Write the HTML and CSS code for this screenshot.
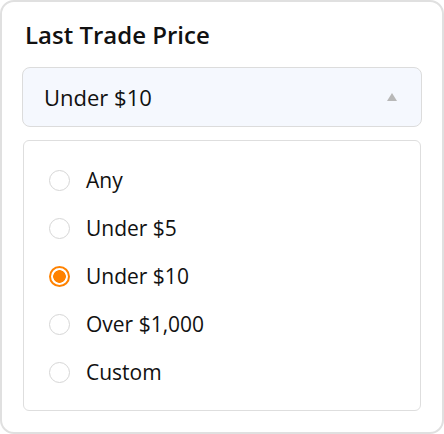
FILE: index.html
```html
<!DOCTYPE html>
<html lang="en">
<head>
<meta charset="utf-8">
<title>Last Trade Price</title>
<link rel="stylesheet" href="styles.css">
</head>
<body>
<div class="card">
  <h2 class="title">Last Trade Price</h2>
  <div class="select">
    <span class="select-value">Under $10</span>
    <span class="caret"></span>
  </div>
  <ul class="options">
    <li class="option"><span class="radio"></span><span class="label">Any</span></li>
    <li class="option"><span class="radio"></span><span class="label">Under $5</span></li>
    <li class="option selected"><span class="radio"></span><span class="label">Under $10</span></li>
    <li class="option"><span class="radio"></span><span class="label">Over $1,000</span></li>
    <li class="option"><span class="radio"></span><span class="label">Custom</span></li>
  </ul>
</div>
</body>
</html>
```

FILE: styles.css
```css
html, body {
  margin: 0;
  padding: 0;
  background: #ffffff;
}

body {
  font-family: "Open Sans", "Noto Sans", sans-serif;
  color: #111111;
}

.card {
  box-sizing: border-box;
  width: 444px;
  height: 434px;
  border: 2px solid #e0e0e0;
  border-radius: 14px;
  padding: 17px 20px 20px 20px;
  display: flex;
  flex-direction: column;
}

.title {
  margin: 0 0 16px 0;
  font-size: 24px;
  line-height: 32px;
  font-weight: 600;
  padding-left: 3px;
}

.select {
  box-sizing: border-box;
  height: 60px;
  border: 1px solid #dcdcdc;
  border-radius: 8px;
  background: #f5f8fe;
  display: flex;
  align-items: center;
  justify-content: space-between;
  padding: 0 24px 0 21px;
}

.select-value {
  font-size: 22px;
  line-height: 30px;
}

.caret {
  width: 0;
  height: 0;
  border-left: 5px solid transparent;
  border-right: 5px solid transparent;
  border-bottom: 8px solid #b8b8b8;
}

.options {
  list-style: none;
  margin: 13px 1px 0 1px;
  padding: 15px 0 14px 0;
  border: 1px solid #dedede;
  border-radius: 6px;
}

.option {
  height: 48px;
  display: flex;
  align-items: center;
  padding-left: 25px;
  gap: 16px;
}

.radio {
  box-sizing: border-box;
  width: 21px;
  height: 21px;
  border: 1.5px solid #d6d6d6;
  border-radius: 50%;
  background: #ffffff;
  flex: none;
}

.option.selected .radio {
  border: 2px solid #ff8200;
  background: radial-gradient(circle, #ff8200 0, #ff8200 6px, #ffffff 6.6px);
}

.label {
  font-size: 21px;
  line-height: 28px;
}
```
